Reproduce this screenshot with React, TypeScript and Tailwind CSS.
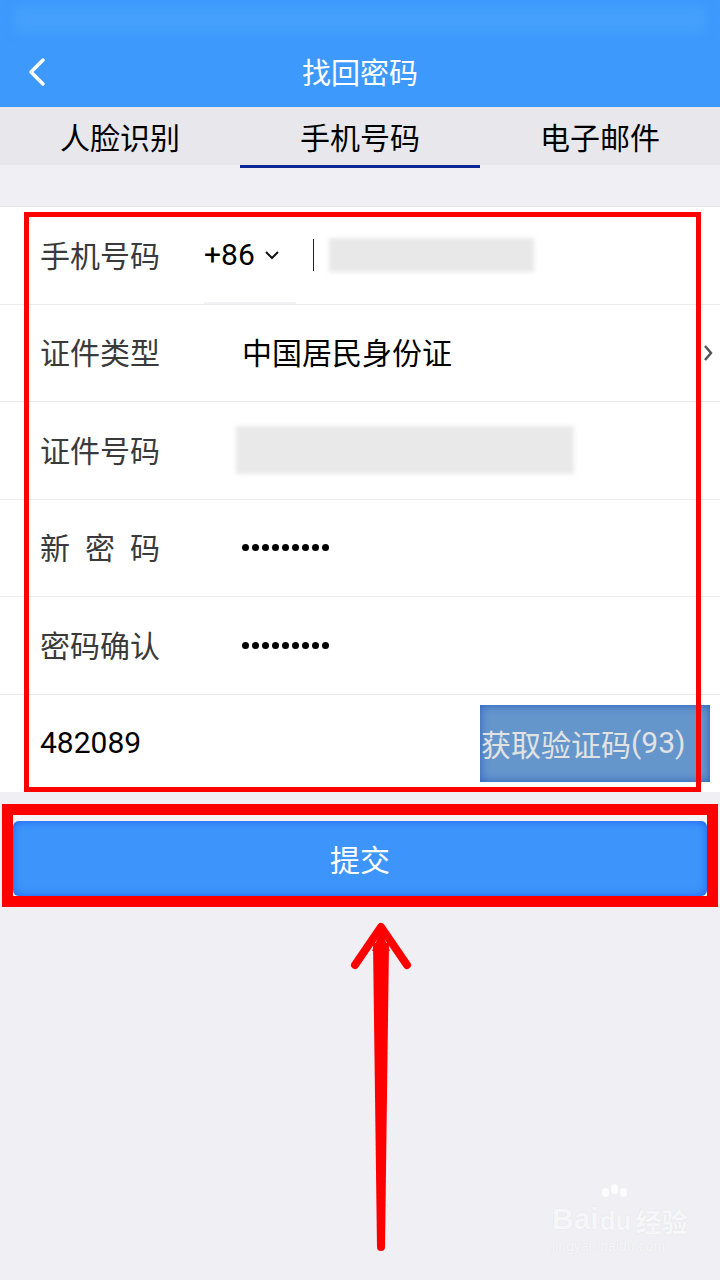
const cjk = { fontFamily: '"Noto Sans CJK SC", "Noto Sans", sans-serif' };
const num = { fontFamily: 'Roboto, "Noto Sans CJK SC", sans-serif' };

function Dots() {
  return (
    <div className="flex items-center gap-[3px]">
      {Array.from({ length: 9 }).map((_, i) => (
        <div key={i} className="w-[7px] h-[7px] rounded-full bg-black" />
      ))}
    </div>
  );
}

function Row({ label, children, spaced }: { label: string; children?: React.ReactNode; spaced?: boolean }) {
  return (
    <div className="h-[97.5px] border-b border-[#e9e9ec] flex items-center pl-[40px]">
      <div
        className={`w-[202px] shrink-0 text-[30px] text-[#3a3a3a] leading-none -mt-[3px] ${spaced ? 'tracking-[15px]' : ''}`}
        style={cjk}
      >
        {label}
      </div>
      {children}
    </div>
  );
}

export default function App() {
  return (
    <div className="w-[720px] h-[1280px] bg-[#efeff4] relative overflow-hidden">
      {/* Header */}
      <div className="bg-[#3d99fc] h-[107px] flex flex-col">
        <div className="h-[36px] px-[14px] pt-[6px]">
          <div className="h-[28px] rounded-md bg-[#44a0fc] blur-[4px]" />
        </div>
        <div className="flex-1 flex items-center relative">
          <svg className="ml-[26px]" width="22" height="30" viewBox="0 0 22 30">
            <path d="M17 3 L5 15 L17 27" fill="none" stroke="white" strokeWidth="3.5" strokeLinecap="round" strokeLinejoin="round" />
          </svg>
          <div className="absolute inset-0 flex items-center justify-center text-white text-[29px] leading-none" style={cjk}>
            找回密码
          </div>
        </div>
      </div>

      {/* Tabs */}
      <div className="h-[58px] bg-[#e8e8ec] grid grid-cols-3 items-center text-center text-[30px] text-black leading-none" style={cjk}>
        <div>人脸识别</div>
        <div>手机号码</div>
        <div>电子邮件</div>
      </div>
      <div className="grid grid-cols-3 h-[3px]">
        <div />
        <div className="bg-[#0b2a98]" />
        <div />
      </div>

      <div className="h-[39px] border-b border-[#e6e6ea]" />

      {/* Form */}
      <div className="bg-white relative">
        <Row label="手机号码">
          <div className="flex items-center -ml-[38px] relative h-full">
            <span className="text-[30px] text-black leading-none" style={num}>+86</span>
            <svg className="ml-[8px]" width="18" height="12" viewBox="0 0 18 12">
              <path d="M3 3 L9 9 L15 3" fill="none" stroke="#111" strokeWidth="2" />
            </svg>
            <div className="absolute left-0 bottom-0 w-[92px] h-[2px] bg-[#f3f3f5]" />
          </div>
          <div className="w-[1.5px] h-[32px] bg-[#222] ml-[32px]" />
          <div className="ml-[15px] w-[205px] h-[34px] bg-[#e8e8e8] blur-[2px]" />
        </Row>
        <Row label="证件类型">
          <span className="text-[30px] text-black leading-none -mt-[3px]" style={cjk}>中国居民身份证</span>
          <svg className="ml-auto mr-[6px]" width="12" height="18" viewBox="0 0 12 18">
            <path d="M3 2 L9 9 L3 16" fill="none" stroke="#555" strokeWidth="2.5" />
          </svg>
        </Row>
        <Row label="证件号码">
          <div className="-ml-[6px] w-[338px] h-[48px] bg-[#e9e9e9] blur-[2px]" />
        </Row>
        <Row label="新密码" spaced>
          <Dots />
        </Row>
        <Row label="密码确认">
          <Dots />
        </Row>
        <div className="h-[97px] flex items-center pl-[40px] pr-[10px]">
          <span className="text-[30px] text-black leading-none" style={num}>482089</span>
          <div
            className="ml-auto w-[230px] h-[77px] bg-[#6496cc] shadow-[inset_0_0_10px_#2c5bbd] flex items-center pl-[1px] text-[30px] text-[#e2e2e2] leading-none whitespace-nowrap"
            style={num}
          >
            <span style={cjk}>获取验证码</span>(93)
          </div>
        </div>

        {/* annotation frame */}
        <div className="absolute left-[24px] top-[5px] w-[677px] h-[580px] border-[5px] border-[#ff0000] pointer-events-none" />
      </div>

      {/* Submit */}
      <div className="mt-[12px] mx-[2px] border-[11px] border-[#ff0000] bg-[#f4f4f6] pt-[6px]">
        <div
          className="h-[75px] rounded-[6px] bg-[#3d95fb] shadow-[inset_0_0_8px_#1f5ff0] flex items-center justify-center text-white text-[30px] leading-none"
          style={cjk}
        >
          提交
        </div>
      </div>

      {/* Arrow */}
      <svg className="block" width="720" height="345" viewBox="0 0 720 345">
        <polygon points="373,36 389,36 385,340 377,340" fill="#ff0000" />
        <circle cx="381" cy="340" r="4" fill="#ff0000" />
        <polyline points="355,58 381,20 407,58" fill="none" stroke="#ff0000" strokeWidth="8" strokeLinecap="round" strokeLinejoin="round" />
        <polygon points="381,24 390,44 372,44" fill="#ff0000" />
      </svg>

      {/* watermark */}
      <div className="absolute left-[552px] top-[1204px] text-white/80 leading-none" style={{ textShadow: '0 0 1px #d4d4da' }}>
        <div className="flex items-end">
          <span className="text-[30px] font-bold" style={{ fontFamily: 'Arial, "Liberation Sans", sans-serif' }}>Bai</span>
          <span className="relative text-[26px] font-bold ml-[1px]" style={{ fontFamily: 'Arial, "Liberation Sans", sans-serif' }}>
            du
            <span className="absolute left-[2px] -top-[20px] flex gap-[2px]">
              <span className="w-[7px] h-[9px] rounded-full bg-white/80" />
              <span className="w-[7px] h-[10px] rounded-full bg-white/80 -mt-[4px]" />
              <span className="w-[7px] h-[9px] rounded-full bg-white/80" />
            </span>
          </span>
          <span className="text-[26px] font-bold ml-[4px]" style={cjk}>经验</span>
        </div>
        <div className="text-[14px] mt-[5px]" style={{ fontFamily: 'Arial, "Liberation Sans", sans-serif' }}>jingyan.baidu.com</div>
      </div>
    </div>
  );
}
